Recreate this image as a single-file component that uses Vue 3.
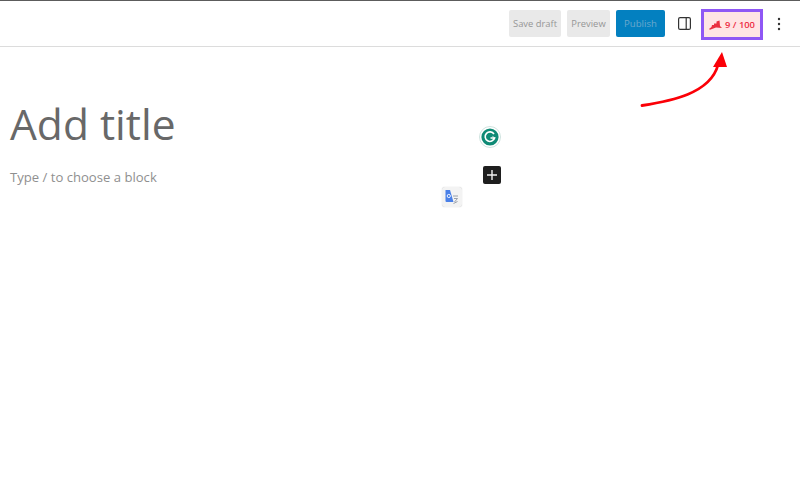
<script setup>
const buttons = [
  { label: 'Save draft', cls: 'ghost' },
  { label: 'Preview', cls: 'ghost' },
  { label: 'Publish', cls: 'publish' }
]
</script>

<template>
  <div class="page">
    <header class="bar">
      <button v-for="b in buttons" :key="b.label" class="btn" :class="b.cls">{{ b.label }}</button>
      <svg class="panel" width="13" height="13" viewBox="0 0 13 13">
        <rect x="0.6" y="0.6" width="11.8" height="11.8" rx="1.5" fill="none" stroke="#333" stroke-width="1.2" />
        <rect x="7.6" y="1" width="1.2" height="11" fill="#333" />
      </svg>
      <div class="score">
        <svg width="13" height="10" viewBox="0 0 13 10">
          <path d="M0 9 L2.5 7 L3 5 L5 5 L5 3.5 L7.5 3.5 L7.5 1.5 L10.5 0.5 L11 6 L13 8 L7 7.6 L1 9.8 Z" fill="#e9303f" />
        </svg>
        <span>9 / 100</span>
      </div>
      <svg class="dots" width="4" height="14" viewBox="0 0 4 14">
        <circle cx="2" cy="2" r="1.2" fill="#333" />
        <circle cx="2" cy="7" r="1.2" fill="#333" />
        <circle cx="2" cy="12" r="1.2" fill="#333" />
      </svg>
    </header>

    <main class="editor">
      <h1 class="title">Add title</h1>
      <p class="hint">Type / to choose a block</p>
    </main>

    <svg class="arrow" width="100" height="66" viewBox="0 0 100 66">
      <path d="M2 53.5 C 30 49, 70 42, 78 13" fill="none" stroke="#fb0007" stroke-width="2.8" stroke-linecap="round" />
      <path d="M82 0 L87 15 L73 15 Z" fill="#fb0007" />
    </svg>

    <div class="grammarly">
      <svg width="22" height="22" viewBox="0 0 22 22">
        <circle cx="11" cy="11" r="10.5" fill="#fff" stroke="#cfe3df" stroke-width="1" />
        <circle cx="11" cy="11" r="8.6" fill="#0e8a75" />
        <path d="M15 8 A4.8 4.8 0 1 0 15.6 12 L11.5 12" fill="none" stroke="#fff" stroke-width="1.6" />
        <path d="M13.5 10.4 L15.8 12 L13.5 14" fill="none" stroke="#fff" stroke-width="0.9" />
      </svg>
    </div>

    <div class="inserter">
      <svg width="10" height="10" viewBox="0 0 10 10">
        <path d="M5 0 V10 M0 5 H10" stroke="#f0f0f0" stroke-width="1.4" />
      </svg>
    </div>

    <div class="translate">
      <svg width="14" height="14" viewBox="0 0 14 14">
        <path d="M0.5 0 H5 L8.5 12 H1.5 Q0.5 12 0.5 11 Z" fill="#4a80e8" />
        <circle cx="3.8" cy="6" r="1.6" fill="none" stroke="#fff" stroke-width="0.9" />
        <path d="M8 6 H13 M9 8.5 L12.5 8.5 M12.5 8.5 L9.5 12 M8.5 13.5 L12.5 11.5" stroke="#8f96a3" stroke-width="0.9" fill="none" />
      </svg>
    </div>
  </div>
</template>

<style>
html, body { margin: 0; background: #fff; }
</style>

<style scoped>
.page {
  position: relative;
  width: 800px;
  height: 500px;
  overflow: hidden;
  background: #fff;
  font-family: "Open Sans", "Noto Sans", sans-serif;
}
.bar {
  display: flex;
  align-items: center;
  justify-content: flex-end;
  box-sizing: border-box;
  height: 47px;
  border-top: 1px solid #5c5c5c;
  border-bottom: 1px solid #dcdcdc;
  padding-right: 19px;
}
.btn {
  height: 27px;
  padding: 0;
  border: 0;
  border-radius: 2px;
  font: 400 9.4px "Open Sans", sans-serif;
}
.ghost {
  background: #e9e9e9;
  color: #969696;
  margin-right: 6px;
}
.ghost:nth-child(1) { width: 52px; }
.ghost:nth-child(2) { width: 43px; }
.publish {
  width: 49px;
  background: #0380c0;
  color: #6ba9cd;
  font-size: 9.6px;
}
.panel { margin: 0 10px 0 13px; }
.score {
  display: flex;
  align-items: center;
  justify-content: center;
  gap: 3px;
  box-sizing: border-box;
  width: 62px;
  height: 31px;
  margin-top: 2px;
  border: 3px solid #8f57f5;
  background: #ffe4e4;
  color: #ee2e45;
  font-size: 9.4px;
  font-weight: 600;
}
.dots { margin-left: 14px; }
.editor { padding: 48px 0 0 10px; }
.title {
  margin: 0;
  font-size: 42.5px;
  line-height: 58px;
  font-weight: 400;
  color: #686868;
}
.hint {
  margin: 14px 0 0;
  font-size: 13.1px;
  line-height: 20px;
  font-weight: 400;
  color: #8f8f8f;
}
.arrow { position: absolute; left: 640px; top: 52px; }
.grammarly { position: absolute; left: 479px; top: 126px; width: 22px; height: 22px; }
.inserter {
  position: absolute;
  left: 483px;
  top: 166px;
  width: 18px;
  height: 18px;
  display: flex;
  align-items: center;
  justify-content: center;
  border-radius: 2px;
  background: #1e1e1e;
}
.translate {
  position: absolute;
  left: 442px;
  top: 187px;
  width: 20px;
  height: 20px;
  display: flex;
  align-items: center;
  justify-content: center;
  border-radius: 3px;
  background: #f3f3f3;
  box-shadow: 0 0 1px #bdbdbd;
}
</style>
